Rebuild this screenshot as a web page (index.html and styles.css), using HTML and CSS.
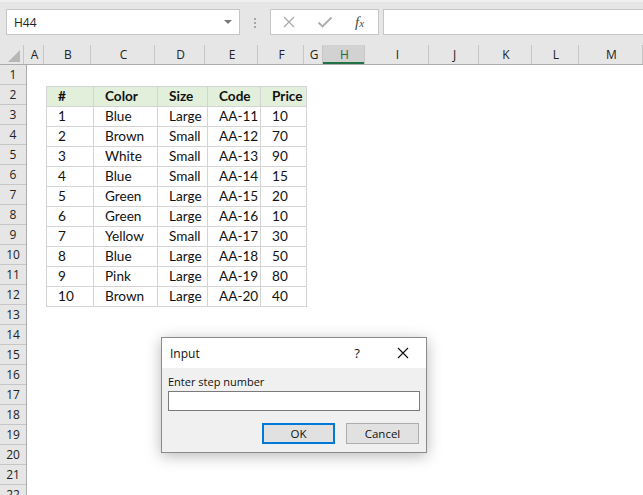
FILE: index.html
```html
<!DOCTYPE html>
<html>
<head>
<meta charset="utf-8">
<link rel="stylesheet" href="styles.css">
</head>
<body>
<div class="app">
  <div class="topbar">
    <div class="namebox"><span class="nametext">H44</span><span class="ddarrow"></span></div>
    <div class="dots"><i></i><i></i><i></i></div>
    <div class="fxbox">
      <svg class="ico" width="14" height="14" viewBox="0 0 14 14"><path d="M2 2 L12 12 M12 2 L2 12" stroke="#ababab" stroke-width="1.4" fill="none"/></svg>
      <svg class="ico" width="16" height="14" viewBox="0 0 16 14"><path d="M1.5 7.5 L5.5 11.5 L14.5 2.5" stroke="#ababab" stroke-width="1.8" fill="none"/></svg>
      <span class="fx"><span class="fxf">f</span><span class="fxx">x</span></span>
    </div>
    <div class="formula"></div>
  </div>
  <div class="colheads">
    <div class="corner"><span class="tri"></span></div>
    <div class="ch w20">A</div>
    <div class="ch w47">B</div>
    <div class="ch w64">C</div>
    <div class="ch w50">D</div>
    <div class="ch w53">E</div>
    <div class="ch w46">F</div>
    <div class="ch w19">G</div>
    <div class="ch w42 sel">H</div>
    <div class="ch w64">I</div>
    <div class="ch w50">J</div>
    <div class="ch w53">K</div>
    <div class="ch w47">L</div>
    <div class="ch w64">M</div>
  </div>
  <div class="sheet">
    <div class="rowheads">
      <div class="rh">1</div><div class="rh">2</div><div class="rh">3</div><div class="rh">4</div>
      <div class="rh">5</div><div class="rh">6</div><div class="rh">7</div><div class="rh">8</div>
      <div class="rh">9</div><div class="rh">10</div><div class="rh">11</div><div class="rh">12</div>
      <div class="rh">13</div><div class="rh">14</div><div class="rh">15</div><div class="rh">16</div>
      <div class="rh">17</div><div class="rh">18</div><div class="rh">19</div><div class="rh">20</div>
      <div class="rh">21</div><div class="rh">22</div>
    </div>
    <div class="cells">
      <div class="tbl">
        <div class="c hd">#</div><div class="c hd">Color</div><div class="c hd">Size</div><div class="c hd">Code</div><div class="c hd">Price</div>
        <div class="c">1</div><div class="c">Blue</div><div class="c">Large</div><div class="c">AA-11</div><div class="c">10</div>
        <div class="c">2</div><div class="c">Brown</div><div class="c">Small</div><div class="c">AA-12</div><div class="c">70</div>
        <div class="c">3</div><div class="c">White</div><div class="c">Small</div><div class="c">AA-13</div><div class="c">90</div>
        <div class="c">4</div><div class="c">Blue</div><div class="c">Small</div><div class="c">AA-14</div><div class="c">15</div>
        <div class="c">5</div><div class="c">Green</div><div class="c">Large</div><div class="c">AA-15</div><div class="c">20</div>
        <div class="c">6</div><div class="c">Green</div><div class="c">Large</div><div class="c">AA-16</div><div class="c">10</div>
        <div class="c">7</div><div class="c">Yellow</div><div class="c">Small</div><div class="c">AA-17</div><div class="c">30</div>
        <div class="c">8</div><div class="c">Blue</div><div class="c">Large</div><div class="c">AA-18</div><div class="c">50</div>
        <div class="c">9</div><div class="c">Pink</div><div class="c">Large</div><div class="c">AA-19</div><div class="c">80</div>
        <div class="c">10</div><div class="c">Brown</div><div class="c">Large</div><div class="c">AA-20</div><div class="c">40</div>
      </div>
    </div>
  </div>
  <div class="dialog">
    <div class="dtitle">
      <span class="dtext">Input</span>
      <span class="help">?</span>
      <svg class="close" width="12" height="12" viewBox="0 0 12 12"><path d="M1 1 L11 11 M11 1 L1 11" stroke="#111" stroke-width="1.1" fill="none"/></svg>
    </div>
    <div class="dbody">
      <div class="dlabel">Enter step number</div>
      <div class="dinput"></div>
      <div class="dbtns">
        <div class="btn ok">OK</div>
        <div class="btn">Cancel</div>
      </div>
    </div>
  </div>
</div>
</body>
</html>
```

FILE: styles.css
```css
* { box-sizing: border-box; }
html, body { margin: 0; padding: 0; }
body { width: 643px; height: 495px; overflow: hidden; background: #fff; font-family: "Open Sans", "Noto Sans", sans-serif; }
.app { position: relative; width: 643px; height: 495px; overflow: hidden; }

.topbar { height: 45px; background: #e6e6e6; display: flex; align-items: flex-start; border-top: 2px solid #f0f0f0; padding-top: 7px; }
.namebox { margin-left: 6px; width: 234px; height: 26px; background: #fff; border: 1px solid #c6c6c6; display: flex; align-items: center; justify-content: space-between; padding: 0 7px 0 7px; }
.nametext { font-size: 12px; color: #222; }
.ddarrow { width: 0; height: 0; border-left: 4px solid transparent; border-right: 4px solid transparent; border-top: 4px solid #7a7a7a; }
.dots { width: 2px; margin: 0 14px; padding-top: 9px; display: flex; flex-direction: column; gap: 2px; }
.dots i { display: block; width: 2px; height: 2px; background: #a6a6a6; }
.fxbox { width: 109px; height: 26px; background: #fff; border: 1px solid #c6c6c6; display: flex; align-items: center; padding-left: 11px; gap: 21px; }
.ico { display: block; }
.fx { font-family: "Liberation Serif", serif; font-style: italic; color: #4a4a4a; font-size: 15px; line-height: 1; margin-left: 1px; }
.fxx { font-size: 11px; }
.formula { flex: 1; height: 26px; margin-left: 4px; margin-right: -2px; background: #fff; border: 1px solid #c6c6c6; }

.colheads { display: flex; height: 20px; background: #e6e6e6; border-bottom: 1px solid #ababab; }
.corner { width: 27px; border-right: 1px solid #c6c6c6; display: flex; align-items: flex-end; justify-content: flex-end; padding: 0 3px 2px 0; }
.tri { width: 0; height: 0; border-left: 12px solid transparent; border-bottom: 12px solid #b7b7b7; }
.ch { flex: none; border-right: 1px solid #c6c6c6; font-size: 12px; color: #222; text-align: center; line-height: 19px; padding-left: 2px; }
.ch.sel { background: #d2d2d2; color: #1e6b3f; box-shadow: inset 0 -2px 0 #217346; }
.w19 { width: 19px; } .w20 { width: 20px; } .w42 { width: 42px; } .w46 { width: 46px; } .w47 { width: 47px; }
.w50 { width: 50px; } .w53 { width: 53px; } .w64 { width: 64px; }

.sheet { display: flex; }
.rowheads { width: 27px; flex: none; background: #e6e6e6; border-right: 1px solid #ababab; }
.rh { height: 20px; border-bottom: 1px solid #c6c6c6; font-size: 12px; color: #222; text-align: center; line-height: 19px; }
.cells { flex: 1; padding: 19px 0 0 19px; }
.tbl { display: inline-grid; grid-template-columns: 47px 64px 50px 53px 46px; border-left: 1px solid #d4d4d4; border-top: 1px solid #d4d4d4; }
.c { height: 20px; border-right: 1px solid #d4d4d4; border-bottom: 1px solid #d4d4d4; padding-left: 11px; font-family: "Lato", "Open Sans", sans-serif; font-size: 13.6px; line-height: 18px; color: #111; white-space: nowrap; }
.c.hd { background: #e2efda; font-weight: bold; }

.dialog { position: absolute; left: 161px; top: 337px; width: 266px; height: 116px; border: 1px solid #8a8a8a; background: #f0f0f0; box-shadow: 0 3px 14px rgba(0,0,0,0.28); font-family: "Open Sans", "Noto Sans", sans-serif; }
.dtitle { height: 30px; background: #fff; display: flex; align-items: center; padding-left: 8px; font-size: 12px; color: #111; }
.dtext { flex: 1; }
.help { font-size: 13px; width: 14px; text-align: center; margin-right: 33px; }
.close { display: block; margin-right: 17px; }
.dbody { padding: 7px 6px 0 6px; }
.dlabel { font-size: 11px; color: #111; line-height: 14px; }
.dinput { margin-top: 2px; height: 20px; background: #fff; border: 1px solid #7a7a7a; }
.dbtns { display: flex; justify-content: flex-end; gap: 11px; margin-top: 12px; padding-right: 1px; }
.btn { width: 73px; height: 21px; background: #e1e1e1; border: 1px solid #adadad; font-size: 11.5px; color: #111; text-align: center; line-height: 19px; }
.btn.ok { border: 2px solid #0078d7; line-height: 17px; }
```
